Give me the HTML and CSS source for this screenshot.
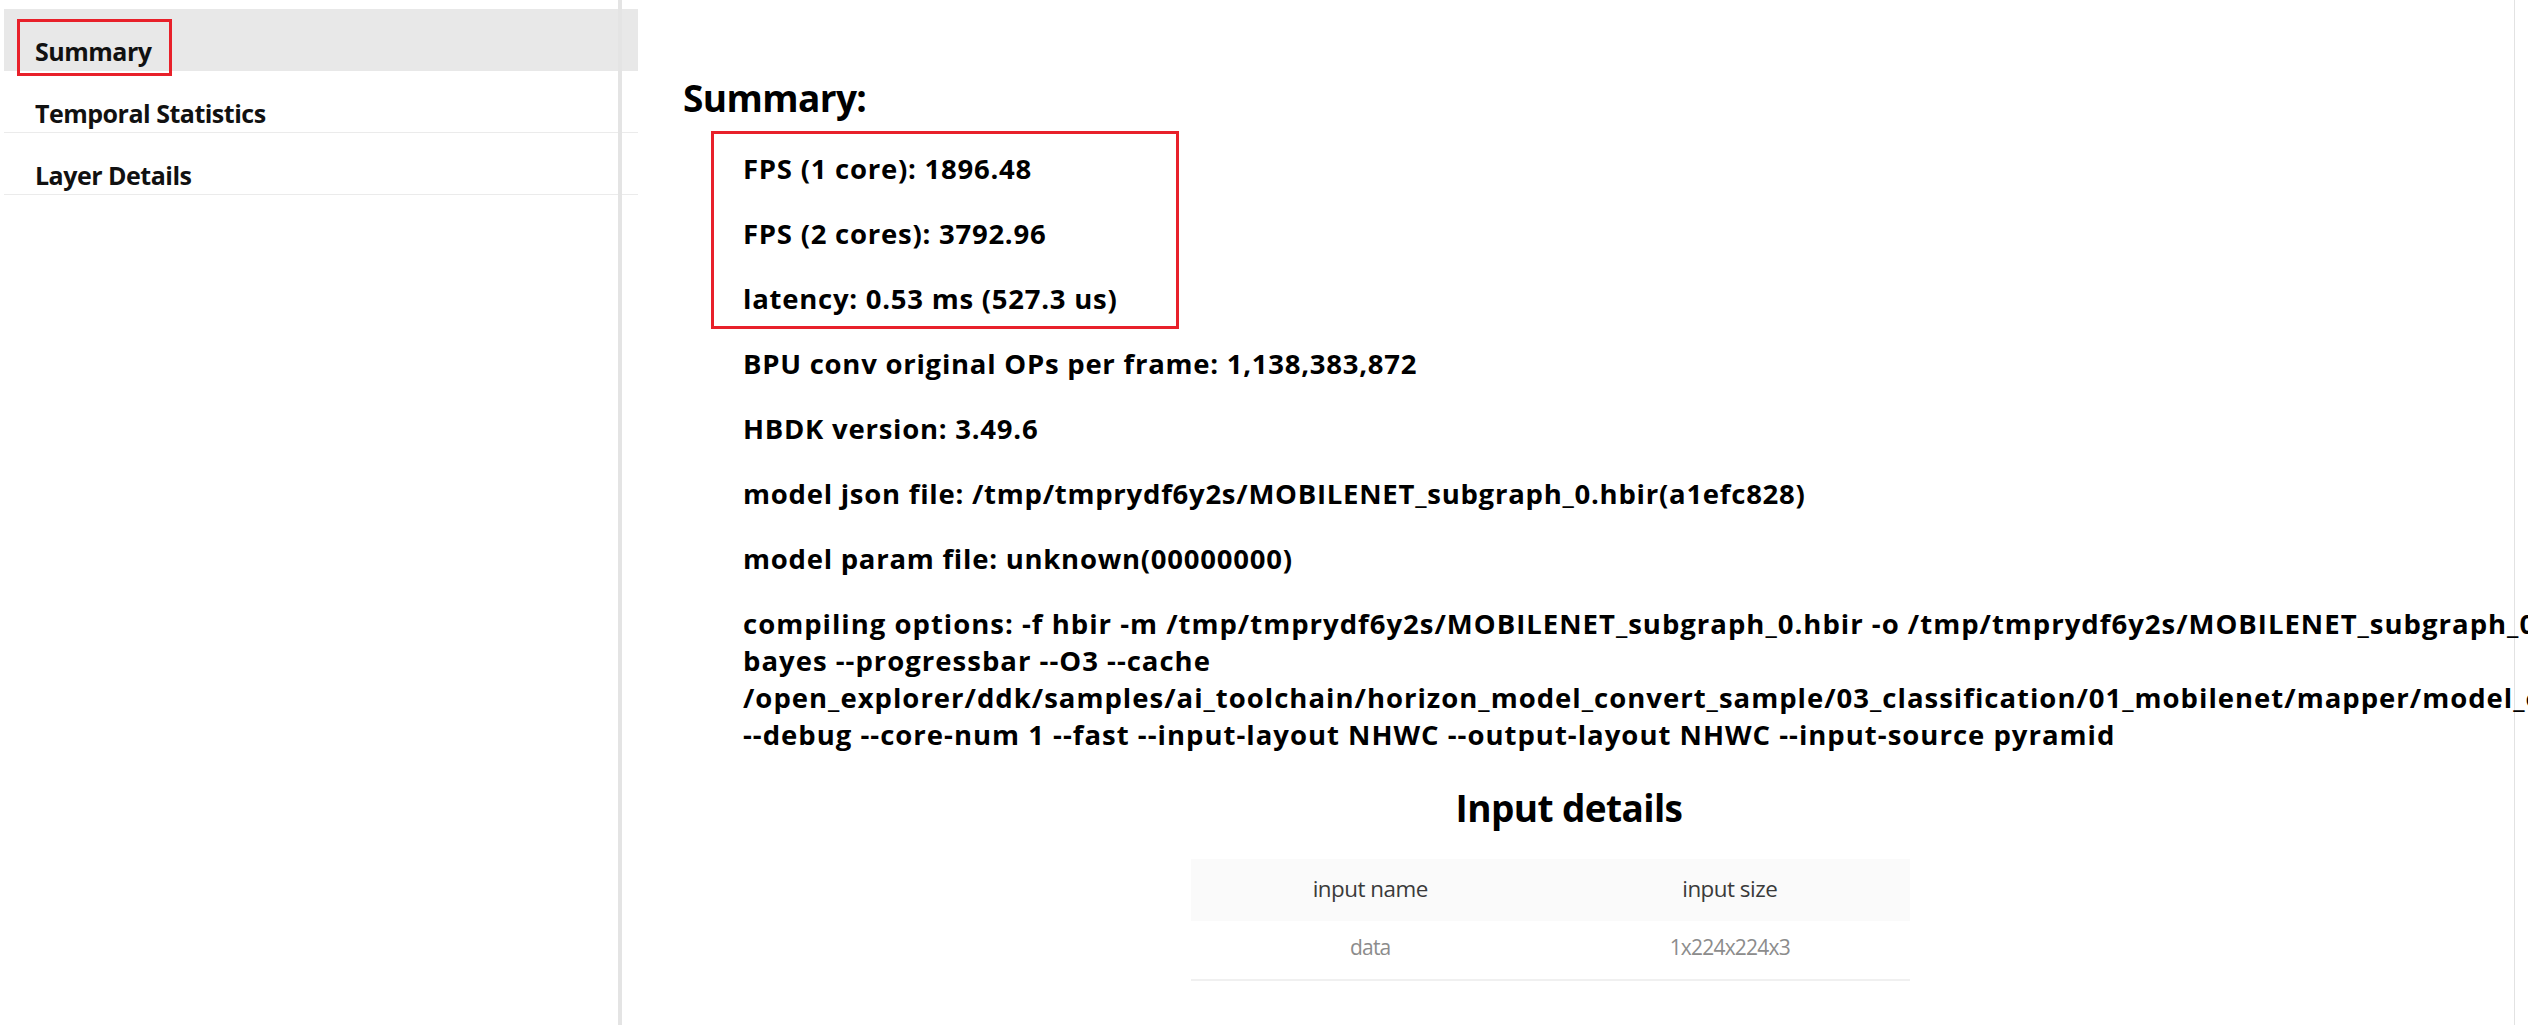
FILE: index.html
```html
<!DOCTYPE html>
<html lang="en">

<head>
    <meta charset="UTF-8">
    <meta name="viewport" content="width=device-width, initial-scale=1.0">
    <title>Model perf report</title>
    <link rel="stylesheet" href="styles.css">
</head>

<body>
    <div class="app">
        <!-- left menu -->
        <div class="sidebar">
            <div class="menu-item active">Summary</div>
            <div class="menu-item">Temporal Statistics</div>
            <div class="menu-item">Layer Details</div>
        </div>

        <!-- report -->
        <div class="content">
            <h2 class="summary-title">Summary:</h2>
            <div class="stats">
                <p>FPS (1 core): 1896.48</p>
                <p>FPS (2 cores): 3792.96</p>
                <p>latency: 0.53 ms (527.3 us)</p>
                <p>BPU conv original OPs per frame: 1,138,383,872</p>
                <p>HBDK version: 3.49.6</p>
                <p>model json file: /tmp/tmprydf6y2s/MOBILENET_subgraph_0.hbir(a1efc828)</p>
                <p>model param file: unknown(00000000)</p>
                <p class="options">compiling options: -f hbir -m /tmp/tmprydf6y2s/MOBILENET_subgraph_0.hbir -o /tmp/tmprydf6y2s/MOBILENET_subgraph_0.hbm --march<br>
                    bayes --progressbar --O3 --cache<br>
                    /open_explorer/ddk/samples/ai_toolchain/horizon_model_convert_sample/03_classification/01_mobilenet/mapper/model_output/.hbdk_cache<br>
                    --debug --core-num 1 --fast --input-layout NHWC --output-layout NHWC --input-source pyramid</p>
            </div>

            <h3 class="details-title">Input details</h3>
            <div class="table-wrap">
                <table class="io-table">
                    <thead>
                        <tr>
                            <th>input name</th>
                            <th>input size</th>
                        </tr>
                    </thead>
                    <tbody>
                        <tr>
                            <td>data</td>
                            <td>1x224x224x3</td>
                        </tr>
                    </tbody>
                </table>
            </div>
        </div>

        <!-- review marks -->
        <div class="mark mark-nav"></div>
        <div class="mark mark-fps"></div>
    </div>
</body>

</html>
```

FILE: styles.css
```css
html {
    overflow: hidden;
}

body {
    margin: 0;
    font-family: "Open Sans", "Noto Sans", sans-serif;
    color: #000;
    background: #fff;
}

.app {
    position: relative;
    display: flex;
    width: 2514px;
    min-height: 100vh;
    border-right: 1px solid #e2e2e2;
}

/* 左侧菜单 */

.sidebar {
    position: relative;
    flex: 0 0 634px;
    margin-left: 4px;
    padding-top: 9px;
}

.sidebar::after {
    content: "";
    position: absolute;
    top: 0;
    bottom: 0;
    right: 16px;
    width: 4px;
    background: #e4e4e4;
}

.menu-item {
    box-sizing: border-box;
    height: 62px;
    padding: 27px 0 0 31px;
    border-bottom: 1px solid #ebebeb;
    font-size: 25px;
    font-weight: 700;
    letter-spacing: -0.5px;
    line-height: 30px;
    color: #111;
}

.menu-item.active {
    background: #e8e8e8;
    border-bottom-color: #e8e8e8;
}

/* 内容 */

.content {
    flex: 1;
    min-width: 0;
    padding-right: 14px;
}

.summary-title {
    margin: 71px 0 25px 45px;
    font-size: 37px;
    letter-spacing: -0.6px;
    line-height: 54px;
}

.stats {
    margin-left: 105px;
}

.stats p {
    margin: 0 0 28px;
    font-size: 27.5px;
    letter-spacing: 0.75px;
    line-height: 37px;
    font-weight: 700;
    white-space: nowrap;
}

.stats .options {
    letter-spacing: 1px;
}

.details-title {
    margin: 0 0 24px;
    text-align: center;
    font-size: 37px;
    letter-spacing: -0.6px;
    line-height: 54px;
}

.table-wrap {
    padding-right: 38px;
}

.io-table {
    width: 719px;
    margin: 0 auto;
    border-collapse: collapse;
    font-size: 22.4px;
    line-height: 35px;
}

.io-table th {
    width: 50%;
    padding: 12px 8px 15px;
    background: #fafafa;
    font-weight: 400;
    letter-spacing: -0.5px;
    color: #3a3a3a;
}

.io-table td {
    padding: 9px 8px 14px;
    text-align: center;
    font-size: 21px;
    letter-spacing: -0.8px;
    color: #8c8c8c;
    border-bottom: 2px solid #f0f0f0;
}

/* 标注框 */

.mark {
    position: absolute;
    box-sizing: border-box;
    border: 3px solid #e8202a;
}

.mark-nav {
    left: 17px;
    top: 19px;
    width: 155px;
    height: 57px;
}

.mark-fps {
    left: 711px;
    top: 131px;
    width: 468px;
    height: 198px;
}
```
